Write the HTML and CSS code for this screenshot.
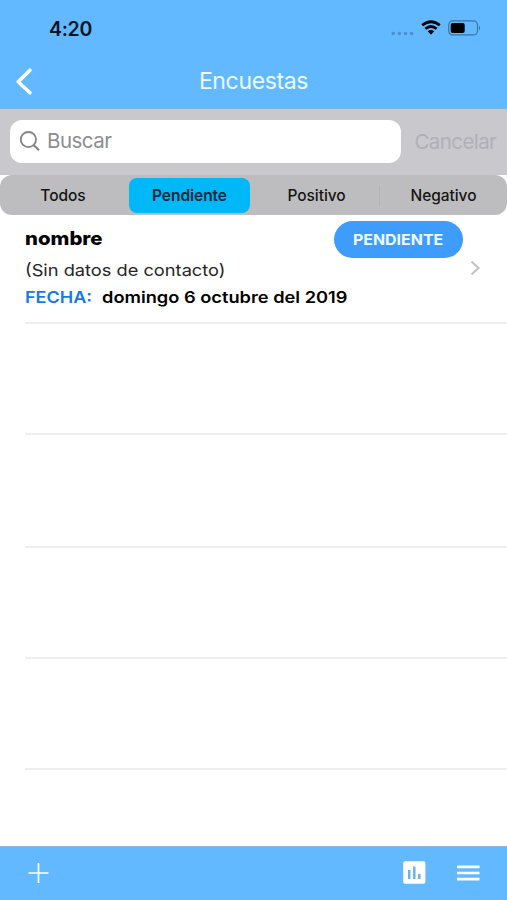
FILE: index.html
```html
<!DOCTYPE html>
<html lang="es">
<head>
<meta charset="utf-8">
<title>Encuestas</title>
<link rel="stylesheet" href="styles.css">
</head>
<body>
<div class="app">
  <header class="header">
    <div class="status">
      <span class="time">4:20</span>
      <div class="indicators">
        <svg class="signal" width="23" height="5" viewBox="0 0 23 5"><g fill="#4b91cc"><circle cx="2.3" cy="2.5" r="1.8"/><circle cx="8.4" cy="2.5" r="1.8"/><circle cx="14.5" cy="2.5" r="1.8"/><circle cx="20.6" cy="2.5" r="1.8"/></g></svg>
        <svg class="wifi" width="20" height="15" viewBox="0 0 20 15"><g fill="none" stroke="#000" stroke-width="2.7"><path d="M1.2 5.3Q10-1.8 18.8 5.3"/><path d="M4.4 8.8Q10 4.2 15.6 8.8"/></g><path d="M6.7 11.3Q10 8.6 13.3 11.3L10 14.7Z"/></svg>
        <svg class="battery" width="33" height="16" viewBox="0 0 33 16"><rect x=".7" y=".9" width="28.8" height="14" rx="4" fill="none" stroke="#3c75a3" stroke-width="1.2"/><rect x="2.7" y="2.9" width="14" height="10" rx="2"/><path d="M31 5.5Q33.2 8 31 10.5Z" fill="#3c75a3"/></svg>
      </div>
    </div>
    <nav class="navbar">
      <svg class="back" width="18" height="28" viewBox="0 0 18 28"><path d="M15.9 2.2L4.2 13.7L15.9 24.8" fill="none" stroke="#fff" stroke-width="3.5" stroke-linecap="round" stroke-linejoin="round"/></svg>
      <h1 class="title">Encuestas</h1>
    </nav>
  </header>
  <section class="search">
    <div class="field">
      <svg width="22" height="22" viewBox="0 0 22 22"><g fill="none" stroke="#858588" stroke-width="1.8"><circle cx="8.4" cy="8.6" r="7.6"/><path d="M13.8 14.2L19 19.2" stroke-width="2.2"/></g></svg>
      <span class="placeholder">Buscar</span>
    </div>
    <span class="cancel">Cancelar</span>
  </section>
  <div class="segments">
    <div class="segment todos">Todos</div>
    <div class="segment selected">Pendiente</div>
    <div class="segment positivo">Positivo</div>
    <div class="segment negativo">Negativo</div>
  </div>
  <main class="list">
    <article class="row first">
      <div class="info">
        <div class="name">nombre</div>
        <div class="contact">(Sin datos de contacto)</div>
        <div class="date"><span class="label"><span class="label-text">FECHA:</span></span><span class="value">domingo 6 octubre del 2019</span></div>
      </div>
      <div class="side">
        <span class="pill"><span class="pill-text">PENDIENTE</span></span>
        <svg class="chevron" width="12" height="16" viewBox="0 0 12 16"><path d="M2.5 1.5L9.5 8L2.5 14.5" fill="none" stroke="#c4c4c7" stroke-width="2.2"/></svg>
      </div>
    </article>
    <div class="row"></div>
    <div class="row tall"></div>
    <div class="row"></div>
    <div class="row"></div>
  </main>
  <footer class="toolbar">
    <svg class="add" width="20" height="20" viewBox="0 0 20 20"><path d="M10.5 0V20M.5 10H20.5" stroke="#fff" stroke-width="1.7"/></svg>
    <svg class="chart" width="23" height="23" viewBox="0 0 23 23"><rect x=".2" y=".2" width="22.2" height="22.5" rx="2" fill="#fff"/><path d="M6.2 9V18M11.3 5.5V18M16.3 13V18" stroke="#67b5ed" stroke-width="2.5"/></svg>
    <svg class="menu" width="23" height="16" viewBox="0 0 23 16"><path d="M0 1.8H22.5M0 8H22.5M0 14.2H22.5" stroke="#fff" stroke-width="2.7"/></svg>
  </footer>
</div>
</body>
</html>
```
FILE: styles.css
```css
* { box-sizing: border-box; }
body { margin: 0; font-family: Inter, "Liberation Sans", sans-serif; background: #fff; color: #000; }
svg { display: block; flex: none; }
.app { width: 507px; height: 900px; display: flex; flex-direction: column; overflow: hidden; }
.header { height: 109px; background: #63b9ff; border-bottom: 1px solid #8cb2d3; flex: none; }
.status { height: 56px; display: flex; justify-content: space-between; padding: 0 26px 0 49px; }
.time { font-size: 19.5px; font-weight: 600; line-height: 24px; margin-top: 17px; letter-spacing: -.3px; color: #051523; }
.indicators { display: flex; align-items: flex-start; }
.signal { margin: 31px 7px 0 0; }
.wifi { margin: 20px 7px 0 0; }
.battery { margin-top: 20px; }
.navbar { height: 52px; display: grid; grid-template-columns: 60px 1fr 60px; }
.back { margin: 12px 0 0 14px; }
.title { margin: 11px 0 0; font-size: 23px; line-height: 28px; font-weight: 400; letter-spacing: -.35px; color: #edfaff; text-align: center; }
.search { height: 66px; background: #c9c8cd; display: flex; align-items: flex-start; padding: 11px 0 0 10px; flex: none; }
.field { width: 391px; height: 43px; border-radius: 12px; background: #fff; display: flex; align-items: center; padding-left: 10px; flex: none; }
.placeholder { font-size: 20.5px; line-height: 26px; letter-spacing: -.5px; color: #8d8d90; margin: -2px 0 0 5px; }
.cancel { font-size: 20.5px; line-height: 26px; letter-spacing: -.6px; color: #b0b0b5; margin: 9px 0 0 13.5px; }
.segments { height: 40px; background: #bdbdbf; border-radius: 12px; display: grid; grid-template-columns: 126px 127px 127px 127px; font-size: 15.5px; font-weight: 500; text-align: center; line-height: 35px; padding: 3px 0; flex: none; letter-spacing: -.05px; color: #151515; }
.selected { background: #00b7f8; border-radius: 8px; width: 121px; margin-left: 3px; font-weight: 600; color: #082a3b; }
.positivo { background: linear-gradient(#b3b3b6, #b3b3b6) right center / 1px 20px no-repeat; }
.list { flex: 1; padding-left: 25px; min-height: 0; }
.row { height: 111px; border-bottom: 2px solid #eeeef0; }
.tall { height: 113px; }
.first { height: 109px; display: flex; justify-content: space-between; }
.info { padding-top: 11px; white-space: nowrap; }
.name, .contact, .label-text, .value { transform-origin: left center; }
.name { font-size: 18.5px; line-height: 24px; font-weight: 800; transform: scaleX(1.1); }
.contact { font-size: 16.5px; line-height: 24px; margin-top: 8px; color: #252525; transform: scaleX(1.105); }
.date { font-size: 16px; line-height: 24px; margin-top: 3px; font-weight: 600; display: flex; }
.label { width: 77px; color: #1778e8; }
.label-text { display: inline-block; transform: scaleX(1.125); }
.value { transform: scaleX(1.14); }
.side { display: flex; align-items: flex-start; padding: 6px 26px 0 0; }
.pill { width: 129px; height: 37px; border-radius: 19px; background: #3d9cfd; color: #f0faff; font-size: 14.5px; line-height: 37px; text-align: center; font-weight: 700; }
.pill-text { display: inline-block; transform: scaleX(1.1); }
.chevron { margin: 39px 0 0 6px; }
.toolbar { height: 54px; background: #63b9ff; border-top: 1px solid #8abae3; display: flex; align-items: center; padding: 0 27px 2px 28px; flex: none; }
.add { margin-right: auto; overflow: visible; }
.chart { margin-right: 31px; }
```
